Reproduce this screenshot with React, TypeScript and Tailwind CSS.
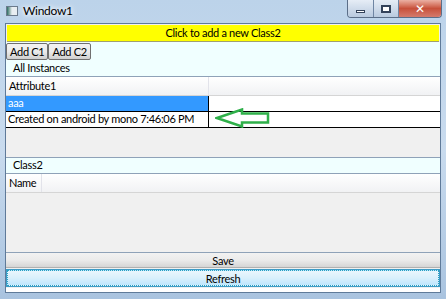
import React from "react";

const font = { fontFamily: 'Lato, "Noto Sans", "DejaVu Sans", sans-serif' };

const CaptionButtons = () => (
  <div className="flex h-[18px] rounded-b-[4px] border border-t-0 border-[#5b6e88] overflow-hidden">
    <div className="w-[26px] flex items-center justify-center bg-gradient-to-b from-[#e6edf6] to-[#b9cadf] border-r border-[#6f85a3]">
      <div className="w-[9px] h-[3px] bg-white border border-[#33425a] mt-[5px]" />
    </div>
    <div className="w-[25px] flex items-center justify-center bg-gradient-to-b from-[#e6edf6] to-[#b9cadf] border-r border-[#6f85a3]">
      <div className="w-[10px] h-[8px] border-[2px] border-[#33425a] bg-white" />
    </div>
    <div className="w-[42px] flex items-center justify-center bg-gradient-to-b from-[#eab0a3] via-[#c7503a] to-[#d47a6c] text-white font-bold text-[12px] leading-none">
      ✕
    </div>
  </div>
);

const Arrow = () => (
  <svg width="56" height="20" viewBox="0 0 56 20" className="absolute left-[215px] top-[108px]">
    <path
      d="M2 10 L27 1.5 L27 5.5 L53 5.5 L53 14.5 L27 14.5 L27 18.5 Z"
      fill="none"
      stroke="#2fb04a"
      strokeWidth="2.5"
    />
  </svg>
);

const btn =
  "h-[17px] px-[3px] border border-[#707070] rounded-[2px] bg-gradient-to-b from-[#f2f2f2] via-[#ebebeb] to-[#cfcfcf] leading-none whitespace-nowrap";

export default function App() {
  return (
    <div
      className="relative w-[446px] h-[299px] overflow-hidden bg-gradient-to-b from-[#bcd3ea] via-[#c9dbee] to-[#a9c3df] text-[11px] tracking-[-0.3px] text-black whitespace-nowrap"
      style={font}
    >
      {/* title bar */}
      <div className="h-[23px] flex items-start">
        <div className="flex items-center h-[22px] pl-[6px] gap-[5px]">
          <div className="w-[12px] h-[10px] border border-[#6b7a8c] bg-gradient-to-r from-[#2b6e63] via-[#e8eef2] to-[#e8eef2]" />
          <span className="text-[12px] text-black" style={{ textShadow: "0 0 6px #fff, 0 0 4px #fff" }}>
            Window1
          </span>
        </div>
        <div className="ml-auto mr-[4px]">
          <CaptionButtons />
        </div>
      </div>

      {/* client area */}
      <div className="mx-[5px] h-[270px] border border-[#5f7a99] bg-[#f0f0f0] flex flex-col">
        <div className="h-[17px] mt-[1px] mx-[1px] bg-[#ffff00] border-b border-[#a0a070] flex items-center justify-center">
          Click to add a new Class2
        </div>
        <div className="bg-[#f0ffff] flex flex-col">
          <div className="flex pt-[1px]">
            <button className={btn}>Add C1</button>
            <button className={btn}>Add C2</button>
          </div>
          <div className="h-[16px] pl-[7px] flex items-center">All Instances</div>
        </div>

        {/* instances grid */}
        <div className="flex flex-col border-t border-[#8fa2b8] bg-[#f0f0f0] h-[80px]">
          <div className="flex h-[19px] bg-gradient-to-b from-[#ffffff] to-[#f1f2f4] border-b border-[#d5d5d5]">
            <div className="w-[203px] pl-[3px] flex items-center border-r border-[#e2e3ea]">Attribute1</div>
            <div className="flex-1" />
          </div>
          <div className="flex h-[16px] bg-white border-b border-black">
            <div className="w-[203px] pl-[2px] flex items-center bg-[#3399ff] text-white border-r border-black">aaa</div>
            <div className="flex-1" />
          </div>
          <div className="flex h-[16px] bg-white border-b border-black">
            <div className="w-[203px] pl-[2px] flex items-center border-r border-black overflow-hidden">
              Created on android by mono 7:46:06 PM
            </div>
            <div className="flex-1" />
          </div>
        </div>

        <div className="h-[17px] mt-[1px] bg-[#f0ffff] border-t border-b border-[#8fa2b8] pl-[7px] flex items-center">
          Class2
        </div>

        {/* class2 grid */}
        <div className="flex-1 flex flex-col bg-[#f0f0f0]">
          <div className="flex h-[19px] bg-gradient-to-b from-[#ffffff] to-[#f1f2f4] border-b border-[#d5d5d5]">
            <div className="w-[36px] pl-[3px] flex items-center border-r border-[#e2e3ea]">Name</div>
            <div className="flex-1" />
          </div>
        </div>

        <button className="h-[16px] mt-[1px] border-t border-[#8fa2b8] border-b border-b-[#b0b0b0] bg-gradient-to-b from-[#f2f2f2] via-[#ebebeb] to-[#d5d5d5] leading-none">
          Save
        </button>
        <div className="p-[1px] mt-[1px]">
          <button className="w-full h-[16px] border border-dotted border-[#2aa0c0] outline outline-1 outline-[#3c9bc6] bg-gradient-to-b from-[#eaf6fd] via-[#d9f0fc] to-[#bee6fd] leading-none">
            Refresh
          </button>
        </div>
        <div className="h-[4px] bg-white" />
      </div>

      <Arrow />
    </div>
  );
}
